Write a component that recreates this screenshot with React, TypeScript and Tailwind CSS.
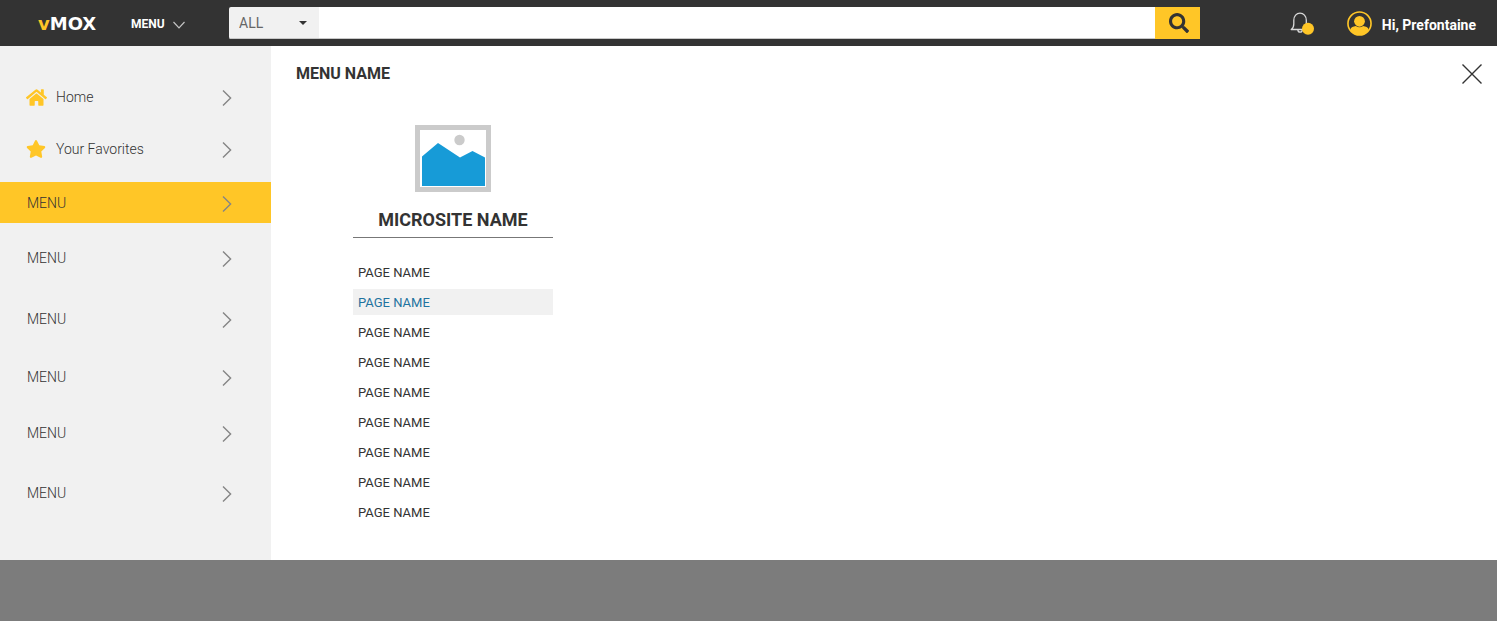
import { FaHome, FaSearch, FaStar } from "react-icons/fa";

type NavItem = { label: string; icon?: "home" | "star"; active?: boolean; gap: string };

const navItems: NavItem[] = [
  { label: "Home", icon: "home", gap: "" },
  { label: "Your Favorites", icon: "star", gap: "mt-[11px]" },
  { label: "MENU", active: true, gap: "mt-[13px]" },
  { label: "MENU", gap: "mt-3.5" },
  { label: "MENU", gap: "mt-5" },
  { label: "MENU", gap: "mt-[17px]" },
  { label: "MENU", gap: "mt-[15px]" },
  { label: "MENU", gap: "mt-[19px]" },
];

const pages = Array.from({ length: 9 }, (_, i) => ({ id: i, active: i === 1 }));

function Chevron() {
  return (
    <svg className="ml-auto mt-0.5 h-4 w-2.5" viewBox="0 0 10 16" fill="none" stroke="#858585" strokeWidth="1.4" aria-hidden="true">
      <path d="M1 .5 8.6 8 1 15.5" />
    </svg>
  );
}

function Header() {
  return (
    <header className="flex h-[46px] items-center bg-[#333333] text-white">
      <div className="flex w-[229px] shrink-0 items-center pl-[38px]">
        <a href="#" className="w-[93px] pt-0.5 font-['DejaVu_Sans',sans-serif] text-lg font-bold leading-6">
          <span className="text-[#ffc627]">v</span>MOX
        </a>
        <button type="button" className="flex items-center gap-2 pt-0.5 text-xs font-bold leading-5">
          MENU
          <svg className="mt-0.5 h-2 w-3" viewBox="0 0 12 8" fill="none" stroke="#c4c4c4" strokeWidth="1.2" aria-hidden="true">
            <path d="M.5 1 6 6.8 11.5 1" />
          </svg>
        </button>
      </div>
      <form className="flex h-8 min-w-0 flex-1 overflow-hidden rounded-l-xs" onSubmit={(e) => e.preventDefault()}>
        <div className="relative w-[90px] shrink-0">
          <select aria-label="Search category" className="h-8 w-full appearance-none border-b border-[#c8c8c8] bg-[#f1f1f1] pl-2.5 text-sm text-[#666666] outline-none">
            <option>ALL</option>
          </select>
          <svg className="pointer-events-none absolute right-3 top-3.5 h-1 w-2" viewBox="0 0 8 4" fill="#333333" aria-hidden="true">
            <path d="M0 0h8L4 4z" />
          </svg>
        </div>
        <input type="search" aria-label="Search" className="min-w-0 flex-1 border-b border-[#c8c8c8] bg-white px-3 text-sm text-[#333333] outline-none" />
        <button type="submit" aria-label="Search" className="flex w-[45px] shrink-0 items-center justify-center bg-[#ffc627] pl-0.5 text-[#333333]">
          <FaSearch size={20} />
        </button>
      </form>
      <div className="flex w-[297px] shrink-0 items-center justify-end gap-[33px] pr-[21px]">
        <button type="button" aria-label="Notifications">
          <svg className="h-6 w-6" viewBox="0 0 24 24" fill="none" aria-hidden="true">
            <path d="M1.2 18.5c2-1.3 2.600-3 2.600-5.500V9.200C3.800 5 6.500 2.200 10 2.200s6.300 2.800 6.300 7V13c0 2.500.8 4.200 2.700 5.500zM7.800 18.800c.2 1.600 1 2.400 2.300 2.400s2.100-.8 2.300-2.400" stroke="#d8d8d8" strokeWidth="1.3" strokeLinejoin="round" />
            <circle cx="18" cy="17.700" r="6" fill="#ffc627" />
          </svg>
        </button>
        <button type="button" className="flex items-center gap-2.5 text-sm font-bold leading-5">
          <svg className="h-[25px] w-[25px]" viewBox="0 0 26 26" aria-hidden="true">
            <defs>
              <clipPath id="avatar">
                <circle cx="13" cy="13" r="12" />
              </clipPath>
            </defs>
            <g clipPath="url(#avatar)" fill="#ffc627">
              <path d="M3.500 26v-7c.6-2.300 3-3 5.700-3.500 2.200 1.800 5.400 1.800 7.600 0 2.700.5 5.100 1.200 5.700 3.500v7z" />
              <circle cx="13" cy="10.700" r="5.600" />
            </g>
            <circle cx="13" cy="13" r="12" fill="none" stroke="#ffc627" strokeWidth="1.700" />
          </svg>
          <span className="pt-[3px]">Hi, Prefontaine</span>
        </button>
      </div>
    </header>
  );
}

function Sidebar() {
  return (
    <nav aria-label="Main menu" className="w-[271px] shrink-0 bg-[#f1f1f1] pt-[30px] text-[#333333]">
      {navItems.map((item, i) => (
        <a
          key={i}
          href="#"
          className={`flex h-[41px] items-center gap-2 pr-[39px] text-sm font-light ${item.icon ? "pl-[26px]" : "pl-[27px]"} ${item.gap} ${item.active ? "bg-[#ffc627]" : ""}`}
        >
          {item.icon && (
            <span className="flex w-[22px] text-[#ffc627]">
              {item.icon === "home" ? <FaHome size={21} className="mt-0.5" /> : <FaStar size={20} />}
            </span>
          )}
          {item.label}
          <Chevron />
        </a>
      ))}
    </nav>
  );
}

export default function App() {
  return (
    <div className="min-h-screen bg-[#7c7c7c] font-[Roboto,sans-serif]">
      <Header />
      <div className="flex">
        <Sidebar />
        <main className="flex-1 bg-white pb-[35px] pl-[25px] pr-[15px] pt-4 text-[#333333]">
          <div className="flex h-6 items-center justify-between">
            <h1 className="text-base font-bold leading-6">MENU NAME</h1>
            <button type="button" aria-label="Close menu">
              <svg className="h-5 w-5" viewBox="0 0 20 20" stroke="#333333" strokeWidth="1.400" aria-hidden="true">
                <path d="M.5.5l19 19M19.500.5l-19 19" />
              </svg>
            </button>
          </div>
          <section className="ml-[57px] mt-[39px] w-[200px]">
            <svg className="mx-auto h-[67px] w-[76px]" viewBox="0 0 76 67" aria-hidden="true">
              <path d="M2.500 2.500h71v62h-71z" fill="#fff" stroke="#cbcbcb" strokeWidth="5" />
              <circle cx="44.500" cy="15" r="5.200" fill="#cbcbcb" />
              <path d="M7 31.500 23 18l22 14.500L57.500 26 70 32.500V61H7z" fill="#179bd7" />
            </svg>
            <h2 className="mt-[15px] border-b border-[#777777] pb-[5px] text-center text-lg font-bold leading-[25px]">MICROSITE NAME</h2>
            <ul className="mt-[21px] space-y-1">
              {pages.map((page) => (
                <li key={page.id}>
                  <a href="#" className={`block px-[5px] pt-0.5 text-[13px] leading-6 ${page.active ? "bg-[#f1f1f1] text-[#1f73a0]" : ""}`}>
                    PAGE NAME
                  </a>
                </li>
              ))}
            </ul>
          </section>
        </main>
      </div>
    </div>
  );
}
